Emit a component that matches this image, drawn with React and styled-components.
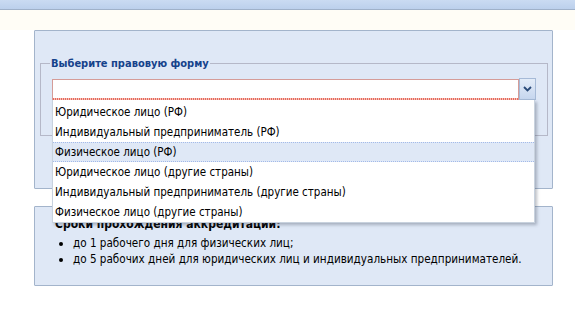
import React from 'react';
import styled, { createGlobalStyle } from 'styled-components';

const GlobalStyle = createGlobalStyle`
  body {
    margin: 0;
    background: #fff;
    font-family: 'DejaVu Sans', Tahoma, sans-serif;
    font-stretch: condensed;
    font-size: 11px;
    color: #000;
  }
`;

const TopBar = styled.div`
  height: 9px;
  background: linear-gradient(to bottom, #cadbf2, #bcd0ec);
  border-bottom: 1px solid #9fb1c9;
`;

const Page = styled.div`
  padding: 20px 22px 0 34px;
  background: linear-gradient(to bottom, #fffdf6 0, #fffdf6 20px, #fff 20px);
`;

const Panel = styled.div`
  position: relative;
  box-sizing: border-box;
  width: 519px;
  height: ${({ $height }) => $height}px;
  margin-top: ${({ $gap }) => $gap || 0}px;
  padding: ${({ $pad }) => $pad};
  background: #dfe8f6;
  border: 1px solid #a3b4cb;
  border-radius: 1px;
`;

const FieldSet = styled.fieldset`
  margin: 26px 0 0;
  padding: 0 11px 35px 11px;
  border: 1px solid #b5b8c8;
  min-width: 0;
`;

const Legend = styled.legend`
  margin-left: -2px;
  padding: 0 1px;
  font-weight: bold;
  font-size: 11px;
  color: #15428b;
`;

const Combo = styled.div`
  position: relative;
  display: flex;
  width: 484px;
  margin-top: 8px;
`;

const Input = styled.div`
  flex: 1;
  box-sizing: border-box;
  height: 21px;
  margin-top: 1px;
  border: 1px solid #d59c98;
  border-bottom: none;
  background:
    repeating-linear-gradient(to right, #e86a5c 0 1px, #f7c4bc 1px 2px) left bottom / 100% 2px no-repeat,
    #fff;
`;

const Trigger = styled.div`
  display: flex;
  align-items: center;
  justify-content: center;
  box-sizing: border-box;
  width: 17px;
  height: 22px;
  background: linear-gradient(to bottom, #e3ecf8, #c6d6ee);
  border: 1px solid #a6bad7;
`;

const List = styled.ul`
  position: absolute;
  top: 22px;
  left: 0;
  z-index: 5;
  box-sizing: border-box;
  width: 483px;
  margin: 0;
  padding: 2px 0 0;
  list-style: none;
  background: #fff;
  border: 1px solid #c8d2de;
  border-top: none;
  box-shadow: 2px 2px 3px rgba(60, 70, 90, 0.35);
`;

const Item = styled.li`
  box-sizing: border-box;
  height: 20px;
  line-height: 18px;
  padding-left: 2px;
  font-size: 11.5px;
  border-top: 1px dotted ${({ $active }) => ($active ? '#a3bae9' : '#fff')};
  border-bottom: 1px dotted ${({ $active }) => ($active ? '#a3bae9' : '#fff')};
  background: ${({ $active }) => ($active ? '#dfe8f6' : '#fff')};
`;

const Heading = styled.div`
  font-weight: bold;
  font-size: 12px;
  line-height: 16px;
  padding-left: 20px;
  margin-bottom: 3px;
`;

const Bullets = styled.ul`
  margin: 0;
  padding-left: 38px;
  font-size: 11.6px;
  line-height: 16px;
`;

const forms = [
  'Юридическое лицо (РФ)',
  'Индивидуальный предприниматель (РФ)',
  'Физическое лицо (РФ)',
  'Юридическое лицо (другие страны)',
  'Индивидуальный предприниматель (другие страны)',
  'Физическое лицо (другие страны)',
];

const App = () => (
  <>
    <GlobalStyle />
    <TopBar />
    <Page>
      <Panel $height={159} $pad="0 4px 0 5px">
        <FieldSet>
          <Legend>Выберите правовую форму</Legend>
          <Combo>
            <Input />
            <Trigger>
              <svg width="9" height="6" viewBox="0 0 9 6">
                <path d="M1 1 L4.5 4.5 L8 1" fill="none" stroke="#2a4a78" strokeWidth="1.8" />
              </svg>
            </Trigger>
            <List>
              {forms.map((f, i) => (
                <Item key={i} $active={i === 2}>{f}</Item>
              ))}
            </List>
          </Combo>
        </FieldSet>
      </Panel>
      <Panel $height={80} $gap={17} $pad="9px 0 0 0">
        <Heading>Сроки прохождения аккредитации:</Heading>
        <Bullets>
          <li>до 1 рабочего дня для физических лиц;</li>
          <li>до 5 рабочих дней для юридических лиц и индивидуальных предпринимателей.</li>
        </Bullets>
      </Panel>
    </Page>
  </>
);

export default App;
